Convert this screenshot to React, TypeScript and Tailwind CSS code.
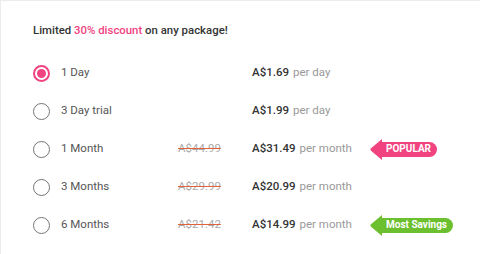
import React from 'react'

type Plan = {
  label: string
  oldPrice?: string
  price: string
  unit: string
  badge?: 'popular' | 'savings'
  selected?: boolean
}

const plans: Plan[] = [
  { label: '1 Day', price: 'A$1.69', unit: 'per day', selected: true },
  { label: '3 Day trial', price: 'A$1.99', unit: 'per day' },
  { label: '1 Month', oldPrice: 'A$44.99', price: 'A$31.49', unit: 'per month', badge: 'popular' },
  { label: '3 Months', oldPrice: 'A$29.99', price: 'A$20.99', unit: 'per month' },
  { label: '6 Months', oldPrice: 'A$21.42', price: 'A$14.99', unit: 'per month', badge: 'savings' },
]

function Radio({ checked }: { checked?: boolean }) {
  return (
    <span
      className={
        checked
          ? 'flex h-[17px] w-[17px] items-center justify-center rounded-full border-2 border-[#f0437f]'
          : 'flex h-[17px] w-[17px] items-center justify-center rounded-full border-[1.5px] border-[#757575]'
      }
    >
      {checked && <span className="h-[9px] w-[9px] rounded-full bg-[#f0437f]" />}
    </span>
  )
}

function Tag({ text, color }: { text: string; color: string }) {
  return (
    <div className="flex items-center">
      <svg width="12" height="21" viewBox="0 0 12 21" className="block">
        <path d="M12 0 L1 9.3 Q0 10.5 1 11.7 L12 21 Z" fill={color} />
      </svg>
      <span
        className="flex h-[15px] items-center rounded-r-full pl-[4px] pr-[6px] text-[10px] font-bold leading-none text-white"
        style={{ backgroundColor: color }}
      >
        {text}
      </span>
    </div>
  )
}

export default function App() {
  return (
    <div
      className="h-[254px] w-[480px] border-l border-t border-[#ececec] bg-white pl-[32px] pt-[21px]"
      style={{ fontFamily: 'Roboto, "Liberation Sans", sans-serif' }}
    >
      <div className="text-[11.4px] font-medium leading-4 text-[#333]">
        Limited <span className="text-[#f0437f]">30% discount</span> on any package!
      </div>
      <div className="mt-[16px]">
        {plans.map((p) => (
          <div key={p.label} className="flex h-[38px] items-center">
            <Radio checked={p.selected} />
            <span className="ml-[11px] w-[117px] text-[11.5px] text-[#555]">{p.label}</span>
            <span className="w-[74px] text-[11.5px] text-[#aaa] line-through decoration-[#e0633a]">
              {p.oldPrice}
            </span>
            <span className="w-[118px] text-[11.5px]">
              <span className="font-medium text-[#333]">{p.price}</span>
              <span className="ml-[4px] text-[#999]">{p.unit}</span>
            </span>
            {p.badge === 'popular' && <Tag text="POPULAR" color="#f0437f" />}
            {p.badge === 'savings' && <Tag text="Most Savings" color="#6cbf2e" />}
          </div>
        ))}
      </div>
    </div>
  )
}
